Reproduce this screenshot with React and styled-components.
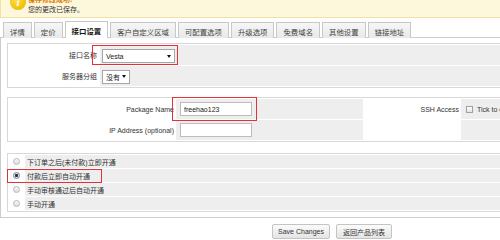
import React from 'react';
import styled, { createGlobalStyle } from 'styled-components';

const GlobalStyle = createGlobalStyle`
  *, *::before, *::after { box-sizing: border-box; }
  html, body { margin: 0; padding: 0; background: #fff; overflow: hidden; }
  body {
    font-family: "Liberation Sans", "Noto Sans CJK SC", sans-serif;
    font-size: 7px;
    color: #333;
  }
`;

const Page = styled.div`
  position: relative;
  display: flow-root;
  width: 664px;
`;

const Notice = styled.div`
  display: flex;
  align-items: flex-start;
  gap: 2px;
  height: 28px;
  margin-top: -10px;
  padding: 3px 0 0 9px;
  background: #fdf7dc;
  border: 1px solid #f1e1a2;
`;

const NoticeIcon = styled.div`
  width: 16px;
  height: 16px;
  border-radius: 50%;
  background: radial-gradient(circle at 40% 35%, #ffe04a, #f0be0a 70%, #d9a400);
  color: #fff;
  font-family: "Liberation Serif", serif;
  font-style: italic;
  font-weight: bold;
  font-size: 11px;
  line-height: 16px;
  text-align: center;
`;

const NoticeText = styled.div`
  display: flex;
  flex-direction: column;
  margin-top: 1px;
`;

const NoticeTitle = styled.div`
  line-height: 10px;
  color: #dd7a00;
  font-weight: bold;
`;

const NoticeBody = styled.div`
  line-height: 10px;
  color: #333;
`;

const TabBar = styled.div`
  display: flex;
  align-items: flex-end;
  gap: 2px;
  height: 20px;
  padding-left: 3px;
`;

const Tab = styled.div`
  position: relative;
  z-index: ${p => (p.$active ? 1 : 0)};
  display: flex;
  align-items: center;
  height: ${p => (p.$active ? 17 : 16)}px;
  padding: 1px 6px 0;
  border: 1px solid #c8c8c8;
  border-bottom: none;
  background: ${p => (p.$active ? '#fff' : 'linear-gradient(#f6f6f6, #e9e9e9)')};
  font-size: 7.4px;
  color: ${p => (p.$active ? '#111' : '#444')};
  font-weight: ${p => (p.$active ? 'bold' : 'normal')};
  white-space: nowrap;
`;

const TabBox = styled.div`
  margin-top: -1px;
  border: 1px solid #cccccc;
  padding: 5px 6px 5px;
`;

const FormTable = styled.table`
  width: 100%;
  table-layout: fixed;
  margin-top: ${p => p.$top || 0}px;
  border: 1px solid #d8d8d8;
  border-collapse: separate;
  border-spacing: 1px;
  background: #fff;
`;

const Label = styled.td`
  width: ${p => (p.$w ? `${p.$w}px` : 'auto')};
  height: ${p => p.$h}px;
  padding: 0 ${p => (p.$pr ?? 2)}px 0 0;
  background: #fff;
  text-align: ${p => p.$align || 'right'};
  white-space: nowrap;
  color: #333;
`;

const Field = styled.td`
  width: ${p => (p.$w ? `${p.$w}px` : 'auto')};
  height: ${p => p.$h}px;
  padding: 0 0 0 ${p => p.$pl}px;
  background: #eeeeee;
  white-space: nowrap;
  overflow: hidden;
  vertical-align: middle;
`;

const Select = styled.div`
  display: inline-flex;
  align-items: center;
  justify-content: space-between;
  width: ${p => p.$w}px;
  height: 14px;
  margin-top: ${p => p.$mt || 0}px;
  padding: 0 3px;
  border: 1px solid #a6a6a6;
  background: #fff;
  color: #222;
  vertical-align: middle;
`;

const Arrow = styled.span`
  width: 0;
  height: 0;
  border-left: 2px solid transparent;
  border-right: 2px solid transparent;
  border-top: 3px solid #111;
`;

const TextInput = styled.div`
  display: flex;
  align-items: center;
  width: 72px;
  height: 14px;
  padding-left: 3px;
  border: 1px solid #bcbcbc;
  background: #fff;
  color: #222;
`;

const CheckRow = styled.div`
  display: flex;
  align-items: center;
  gap: 4px;
`;

const Checkbox = styled.span`
  width: 7px;
  height: 7px;
  border: 1px solid #a0a0a0;
  background: linear-gradient(#fdfdfd, #e4e4e4);
`;

const Radio = styled.span`
  display: inline-block;
  width: 7px;
  height: 7px;
  border-radius: 50%;
  border: 1px solid ${p => (p.$checked ? '#6e7f96' : '#b9b9b9')};
  background: ${p =>
    p.$checked
      ? 'radial-gradient(circle, #2b2b2b 0 1.3px, #e3e9f2 1.8px)'
      : 'linear-gradient(#f8f8f8, #dcdcdc)'};
  vertical-align: middle;
`;

const RadioText = styled.span`
  color: #333;
`;

const ButtonRow = styled.div`
  display: flex;
  justify-content: center;
  gap: 6px;
  margin-top: 6px;
`;

const Button = styled.button`
  width: ${p => p.$w}px;
  height: 15px;
  padding: 0;
  border: 1px solid #c4c4c4;
  border-radius: 2px;
  background: linear-gradient(#fbfbfb, #e4e4e4);
  font-family: inherit;
  font-size: 7px;
  color: #333;
`;

const Highlight = styled.div`
  position: absolute;
  left: ${p => p.$x}px;
  top: ${p => p.$y}px;
  width: ${p => p.$w}px;
  height: ${p => p.$h}px;
  border: 1px solid #e5303a;
  pointer-events: none;
`;

const tabs = ['详情', '定价', '接口设置', '客户自定义区域', '可配置选项', '升级选项', '免费域名', '其他设置', '链接地址'];

const radios = ['下订单之后(未付款)立即开通', '付款后立即自动开通', '手动审核通过后自动开通', '手动开通'];

export default function App() {
  return (
    <Page>
      <GlobalStyle />
      <Notice>
        <NoticeIcon>i</NoticeIcon>
        <NoticeText>
          <NoticeTitle>保存修改成功!</NoticeTitle>
          <NoticeBody>您的更改已保存。</NoticeBody>
        </NoticeText>
      </Notice>

      <TabBar>
        {tabs.map(t => (
          <Tab key={t} $active={t === '接口设置'}>{t}</Tab>
        ))}
      </TabBar>

      <TabBox>
        <FormTable>
          <tbody>
            <tr>
              <Label $w={90} $h={20}>接口名称</Label>
              <Field $h={20} $pl={2}>
                <Select $w={73} $mt={2}>Vesta<Arrow /></Select>
              </Field>
            </tr>
            <tr>
              <Label $h={20}>服务器分组</Label>
              <Field $h={20} $pl={2}>
                <Select $w={28} $mt={1}>没有<Arrow /></Select>
              </Field>
            </tr>
          </tbody>
        </FormTable>

        <FormTable $top={9}>
          <tbody>
            <tr>
              <Label $w={166} $h={20} $pr={1}>Package Name</Label>
              <Field $w={187} $h={20} $pl={4}>
                <TextInput>freehao123</TextInput>
              </Field>
              <Label $w={96} $h={20} $pr={1}>SSH Access</Label>
              <Field $h={20} $pl={5}>
                <CheckRow>
                  <Checkbox />
                  <span>Tick to enable SSH Access</span>
                </CheckRow>
              </Field>
            </tr>
            <tr>
              <Label $h={20} $pr={1}>IP Address (optional)</Label>
              <Field $h={20} $pl={4}>
                <TextInput />
              </Field>
              <Label $h={20} />
              <Field $h={20} $pl={5} />
            </tr>
          </tbody>
        </FormTable>

        <FormTable $top={11}>
          <tbody>
            {radios.map((r, i) => (
              <tr key={r}>
                <Label $w={15} $h={13} $pr={0} $align="center">
                  <Radio $checked={i === 1} />
                </Label>
                <Field $h={13} $pl={2}>
                  <RadioText>{r}</RadioText>
                </Field>
              </tr>
            ))}
          </tbody>
        </FormTable>
      </TabBox>

      <ButtonRow>
        <Button $w={58}>Save Changes</Button>
        <Button $w={56}>返回产品列表</Button>
      </ButtonRow>

      <Highlight $x={92} $y={45} $w={86} $h={20} />
      <Highlight $x={172} $y={97} $w={85} $h={24} />
      <Highlight $x={7} $y={169} $w={95} $h={14} />
    </Page>
  );
}
